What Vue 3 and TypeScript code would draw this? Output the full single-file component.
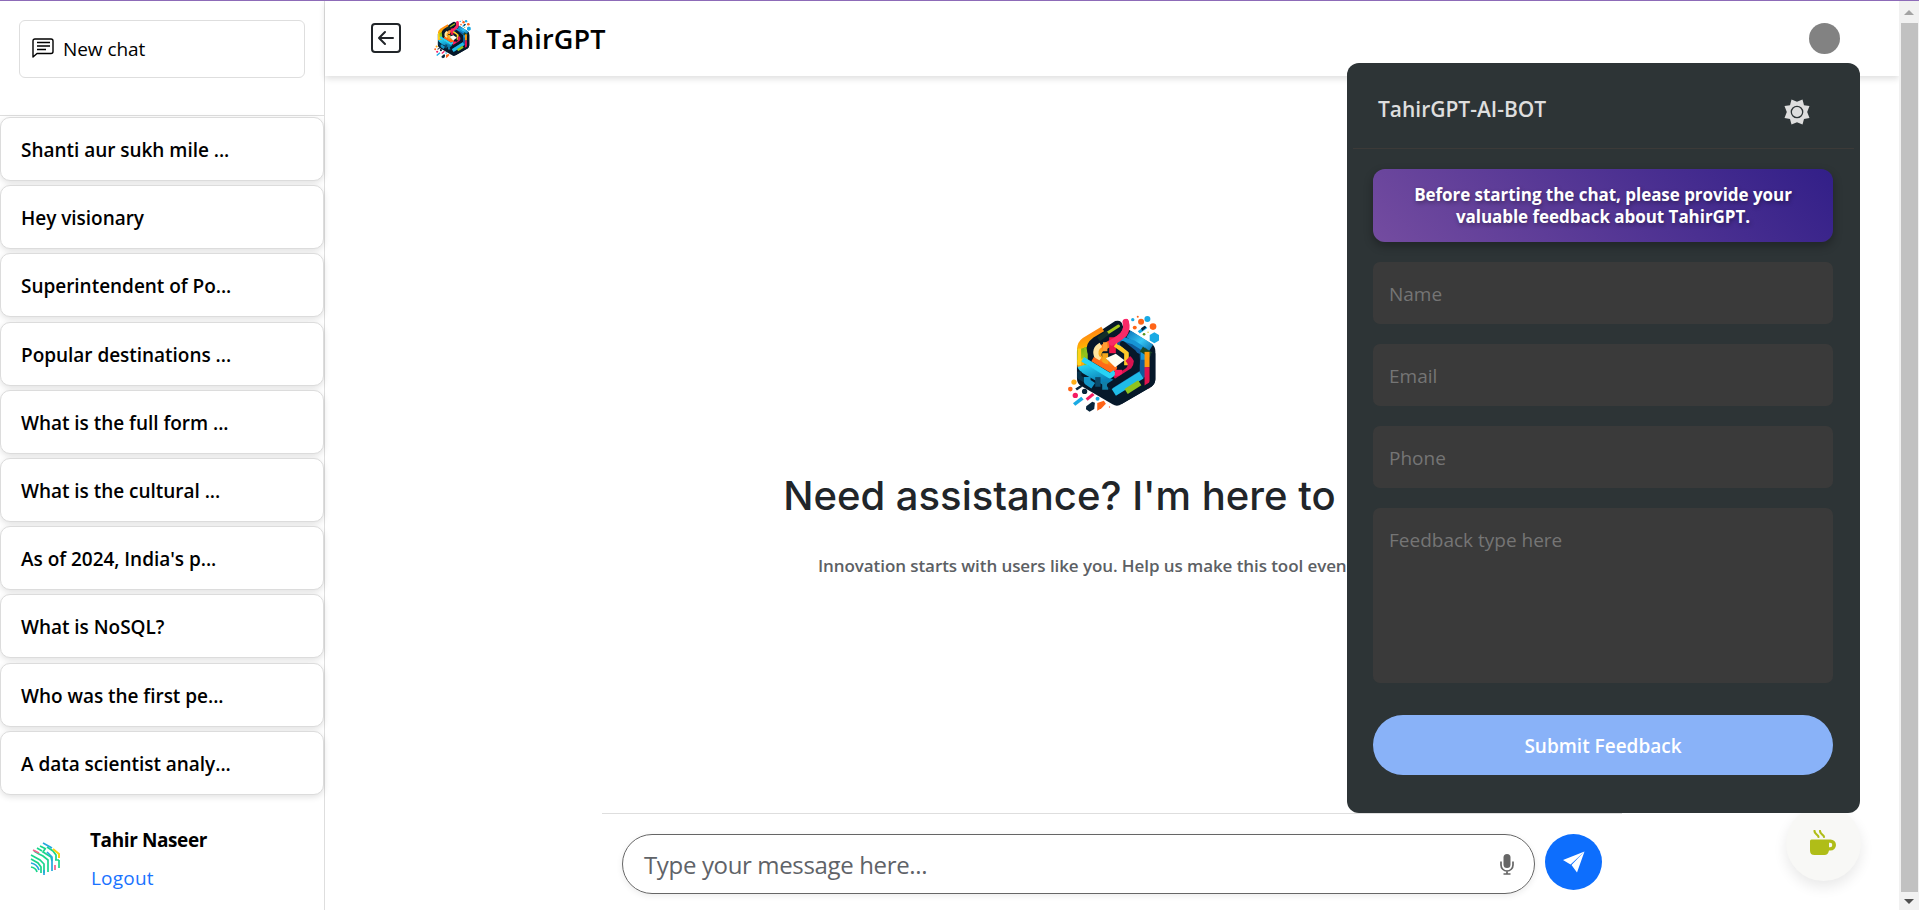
<script setup lang="ts">
const chats: string[] = [
  'Shanti aur sukh mile ...',
  'Hey visionary',
  'Superintendent of Po...',
  'Popular destinations ...',
  'What is the full form ...',
  'What is the cultural ...',
  "As of 2024, India's p...",
  'What is NoSQL?',
  'Who was the first pe...',
  'A data scientist analy...',
]
const fields: string[] = ['Name', 'Email', 'Phone']
</script>

<template>
  <svg class="defs" width="0" height="0" aria-hidden="true">
    <linearGradient id="warm" gradientUnits="userSpaceOnUse" x1="250" y1="90" x2="215" y2="270">
      <stop offset="0" stop-color="#ff2d75"/><stop offset=".38" stop-color="#f0164c"/><stop offset=".4" stop-color="#ff5a1f"/><stop offset=".6" stop-color="#ffb61c"/><stop offset=".8" stop-color="#ff6a12"/><stop offset="1" stop-color="#f04a1b"/>
    </linearGradient>
    <linearGradient id="left-band" gradientUnits="userSpaceOnUse" x1="118" y1="140" x2="160" y2="280">
      <stop offset="0" stop-color="#ff8a12"/><stop offset=".24" stop-color="#ffb400"/><stop offset=".26" stop-color="#7cb518"/><stop offset=".44" stop-color="#a8cc12"/><stop offset=".46" stop-color="#ffd000"/><stop offset=".58" stop-color="#ff9f0f"/><stop offset=".6" stop-color="#27d0f2"/><stop offset="1" stop-color="#0b83b8"/>
    </linearGradient>
    <linearGradient id="right-band" gradientUnits="userSpaceOnUse" x1="270" y1="120" x2="335" y2="190">
      <stop offset="0" stop-color="#0d77bd"/><stop offset=".5" stop-color="#35c6f5"/><stop offset="1" stop-color="#0a6aa8"/>
    </linearGradient>
    <symbol id="logo" viewBox="82 72 278 298">
      <path d="M226 93 Q246 88 249 108 L336 162 Q347 169 347 184 V270 Q346 284 334 292 L246 343 Q232 353 218 344 L124 289 Q111 281 111 266 V185 Q111 170 124 160Z" fill="#06182a"/>
      <g fill="none" stroke-linejoin="round">
        <path d="M192 123 L136 157 Q126 164 126 178 V222 Q126 232 136 238 L216 284" stroke="url(#left-band)" stroke-width="29"/>
        <path d="M138 172 V226" stroke="#8fc31f" stroke-width="11"/>
        <path d="M118 176 V226" stroke="#ffd21a" stroke-width="11"/>
        <path d="M118 245 V262 L140 275" stroke="#07334d" stroke-width="13"/>
        <path d="M142 262 V276 L160 288" stroke="#1295c8" stroke-width="20"/>
        <path d="M174 262 V291" stroke="#0b4a6b" stroke-width="16"/>
        <path d="M196 276 V300" stroke="#117fa8" stroke-width="18"/>
        <path d="M238 106 L164 151 Q144 165 150 184 Q156 204 172 214" stroke="#06182a" stroke-width="17" stroke-linecap="round"/>
        <path d="M236 108 L183 142" stroke="#a5c81b" stroke-width="9" stroke-linecap="round"/>
        <path d="M204 128 L176 148" stroke="#132f28" stroke-width="14"/>
        <path d="M258 96 Q266 130 236 146 L187 174 Q167 188 180 208 L222 234" stroke="url(#warm)" stroke-width="19" stroke-linecap="round"/>
        <path d="M183 165 Q160 178 172 204 L180 210" stroke="#ffe6a0" stroke-width="15"/>
        <path d="M196 157 V184" stroke="#ff9f35" stroke-width="13"/>
        <path d="M218 142 V190" stroke="#ef1748" stroke-width="20"/>
        <path d="M196 190 V222" stroke="#f5a71b" stroke-width="18"/>
        <path d="M226 164 L260 188 V226" stroke="#ffc928" stroke-width="14"/>
        <path d="M158 208 L212 240 L226 232" stroke="#ff6b17" stroke-width="15"/>
        <path d="M128 208 L210 258 L226 248" stroke="#28d3f4" stroke-width="16"/>
        <path d="M264 206 Q286 226 262 246 L226 268" stroke="#d91350" stroke-width="21"/>
        <path d="M236 240 V258" stroke="#ff1b62" stroke-width="22"/>
        <path d="M266 132 L334 174" stroke="url(#right-band)" stroke-width="24"/>
        <path d="M236 152 L312 184 V250 L226 304" stroke="#0e5c9c" stroke-width="24"/>
        <path d="M246 146 L282 158 L310 176 V210" stroke="#1695d6" stroke-width="13"/>
        <path d="M305 178 L334 196" stroke="#1c4725" stroke-width="17"/>
        <path d="M249 162 L281 188 Q302 214 280 242 L210 287" stroke="#06182a" stroke-width="17" stroke-linecap="round"/>
        <path d="M258 96 Q264 128 236 146 L216 158" stroke="#fa2a68" stroke-width="18" stroke-linecap="round"/>
        <path d="M322 186 V232" stroke="#ff9a0b" stroke-width="15"/>
        <path d="M322 232 V296" stroke="#e0134e" stroke-width="15"/>
        <path d="M222 308 L305 256" stroke="#1fbce8" stroke-width="24"/>
        <path d="M259 305 L300 279" stroke="#8fc31f" stroke-width="18"/>
        <path d="M340 190 V268 Q340 279 330 286 L243 336" stroke="#06182a" stroke-width="14"/>
      </g>
      <path d="M198 205 L228 192 L254 211 L226 232Z" fill="#fffdf0"/>
      <g fill="#19aae4"><path d="M344 127l14 8v17l-14 8-14-8v-17z"/><circle cx="323" cy="87" r="9"/><circle cx="279" cy="89" r="5"/><path d="M294 124l22-17 7 7-23 17z"/><circle cx="173" cy="327" r="6"/><path d="M99 341l25-20 7 8-25 19z"/></g>
      <g fill="#ff6417"><circle cx="304" cy="95" r="9"/><circle cx="340" cy="110" r="10"/><circle cx="285" cy="113" r="6"/><circle cx="91" cy="298" r="7"/><path d="M172 363v-23l20-7 6 9-13 14z"/><circle cx="294" cy="80" r="3"/></g>
      <g fill="#08243a"><circle cx="134" cy="305" r="8"/><path d="M139 350l18-14 8 3-2 19-14 8-11-7zM106 296l17-10 4 5-16 11zM304 115l11-8 5 6-13 10z"/></g>
      <g fill="#f51b62"><circle cx="106" cy="317" r="8"/><path d="M137 326l20-16 7 6-21 17z"/></g>
      <circle cx="102" cy="277" r="8" fill="#ffad16"/><circle cx="313" cy="133" r="4" fill="#57931c"/><circle cx="325" cy="127" r="2" fill="#d1c915"/><circle cx="209" cy="352" r="2" fill="#f76542"/>
    </symbol>
  </svg>
  <div class="page">
    <div class="layout">
      <aside class="sidebar">
        <div class="top">
          <button class="new-chat">
            <svg width="22" height="20" viewBox="0 0 22 20" fill="none" stroke="#000" stroke-width="1.400" stroke-linejoin="round"><path d="M1 19V3q0-2 2-2h16q2 0 2 2v10.500q0 2-2 2H5z"/><path d="M5 4.500h13M5 8h13M5 11.500h9"/></svg>
            <span>New chat</span>
          </button>
        </div>
        <nav class="history">
          <div v-for="c in chats" :key="c" class="chat"><span>{{ c }}</span></div>
        </nav>
        <div class="user">
          <svg class="avatar" width="30" height="34" viewBox="0 0 30 34" fill="none" stroke="#19d58b" stroke-width="1.700">
            <path d="M7 6l5 3M10 4l6 3M4 9l5 3 4 2 5 4v12M1 13l9 5 4 4v9M1 17l7 4 3 4v6M1 25q5 1 6 5M15 7l-2 3 8 5 1 4M17 5l6 4 3 4v5M29 18v8M25 18h4"/>
            <path stroke="#24a8dc" d="M13 1l9 5M1 21q6 1 8 7M17 10l5 5v14M14 28v5"/>
            <path stroke="#f4618c" d="M3 8l6 3M25 23v5"/><path stroke="#f9d314" stroke-width="2" d="M23 7l6 5v4"/>
          </svg>
          <div class="who"><b>Tahir Naseer</b><a>Logout</a></div>
        </div>
      </aside>
      <div class="content">
        <header class="header">
          <svg class="back" width="32" height="32" viewBox="0 0 32 32" fill="none" stroke="#212529" stroke-width="2" stroke-linecap="round" stroke-linejoin="round"><rect x="2" y="2" width="28" height="28" rx="3"/><path d="M23 16H9.500M15 10l-6 6 6 6"/></svg>
          <svg class="brand-logo" width="37" height="40"><use href="#logo"/></svg>
          <span class="brand">TahirGPT</span>
          <i class="dot"></i>
        </header>
        <main class="hero">
          <svg class="hero-logo" width="93" height="99"><use href="#logo"/></svg>
          <h1>Need assistance? I'm here to help!</h1>
          <p>Innovation starts with users like you. Help us make this tool even better!</p>
        </main>
        <footer class="composer">
          <div class="message">
            <span>Type your message here...</span>
            <svg width="14" height="21" viewBox="0 0 14 21"><rect x="3.500" y="0" width="7" height="14" rx="3.500" fill="#666"/><path d="M1 7.500V11a6 6 0 0 0 12 0V7.500M7 17v3M3.500 20h7" fill="none" stroke="#666" stroke-width="1.700"/></svg>
          </div>
          <button class="send"><svg width="22" height="22" viewBox="0 0 22 22" fill="#fff"><path d="M21.500.5L0 9l7.500 4.500zM21.500.5L8.500 14l5.500 7.500z"/></svg></button>
        </footer>
      </div>
      <div class="scrollbar"><i class="up"></i><i class="thumb"></i><i class="down"></i></div>
    </div>
    <button class="coffee"><svg width="26" height="26" viewBox="0 0 26 26"><path d="M0 11q0-1.500 1.500-1.500H20.500a5.500 5.500 0 0 1 0 11h-1.500q-1 4.500-4.500 4.500H4.500q-4.500 0-4.500-4.500zM19 12.700V17.300h1a2.300 2.300 0 0 0 0-4.600z" fill="#b0bd18" fill-rule="evenodd"/><path d="M4.500 1q0 2 2 3.300T8.500 7M10 1q0 2 2 3.300T14 7" fill="none" stroke="#b0bd18" stroke-width="2.200" stroke-linecap="round"/></svg></button>
    <section class="panel">
      <div class="panel-head">
        <span>TahirGPT-AI-BOT</span>
        <svg width="26" height="26" viewBox="0 0 26 26"><path fill="#dedede" d="M13 2.800L18.500.5 20 6.200 25.500 7 23.200 13 25.500 19 20 20 18.500 25.500 13 23.200 7.500 25.500 6 20 .5 19 2.800 13 .5 7 6 6.200 7.500.5z"/><circle cx="13" cy="13" r="5.700" fill="#dedede" stroke="#2d3436" stroke-width="1.300"/></svg>
      </div>
      <div class="form">
        <div class="banner">Before starting the chat, please provide your<br>valuable feedback about TahirGPT.</div>
        <div v-for="f in fields" :key="f" class="field"><span>{{ f }}</span></div>
        <div class="field area"><span>Feedback type here</span></div>
        <button class="submit">Submit Feedback</button>
      </div>
    </section>
  </div>
</template>

<style>
body { margin: 0; overflow: hidden; background: #fff; }
</style>

<style scoped>
* { box-sizing: border-box; }
.defs { position: absolute; }
button { border: 0; padding: 0; font: inherit; }
svg { display: block; flex: none; }
.page { position: relative; width: 1919px; height: 910px; overflow: hidden; border-top: 1px solid #8d6bb8; font-family: "Segoe UI", "Open Sans", "Noto Sans", sans-serif; color: #000; }
.layout { display: flex; height: 909px; }
.sidebar { width: 325px; height: 100%; border-right: 1px solid #dedede; display: flex; flex-direction: column; flex: none; }
.top { height: 115px; padding: 19px 19px 0; border-bottom: 1px solid #dedede; flex: none; }
.new-chat { display: flex; align-items: center; gap: 9px; width: 286px; height: 58px; padding: 0 12px; background: #fff; border: 1px solid #dedede; border-radius: 6px; font-size: 19px; letter-spacing: -.05px; }
.new-chat svg { margin-top: -2px; }
.history { display: flex; flex-direction: column; gap: 4.200px; padding-top: 1px; }
.chat { height: 64px; width: 324px; padding: 2px 0 0 20px; display: flex; align-items: center; background: #fff; border: 1px solid #dcdcdc; border-radius: 10px; box-shadow: 0 2px 6px rgba(0,0,0,.12); font-size: 19px; font-weight: 600; letter-spacing: -.03px; flex: none; }
.user { display: flex; padding: 32px 0 0 30px; }
.avatar { margin-top: 15px; }
.who { display: flex; flex-direction: column; margin-left: 30px; font-size: 19px; line-height: 27px; gap: 11px; }
.who b { letter-spacing: -.4px; }
.who a { color: #1a73ff; padding-left: 1px; letter-spacing: .2px; }
.content { width: 1574px; display: flex; flex-direction: column; }
.header { height: 75px; display: flex; align-items: center; padding: 0 59px 0 45px; box-shadow: 0 3px 6px rgba(0,0,0,.12); flex: none; }
.back { margin-top: -1px; }
.brand-logo { margin-left: 32px; }
.brand { margin-left: 15px; font-size: 27px; font-weight: 600; letter-spacing: .1px; }
.dot { width: 31px; height: 31px; border-radius: 50%; background: #828282; margin-left: auto; }
.hero { height: 737px; display: flex; flex-direction: column; align-items: center; padding-top: 238px; flex: none; }
.hero-logo { margin-left: 3px; }
h1 { margin: 53px 0 0; font: 500 40px/60px Inter, sans-serif; color: #212529; white-space: nowrap; }
p { margin: 25px 0 0; font-size: 17px; line-height: 30px; font-weight: 600; letter-spacing: -.08px; color: #5c6064; white-space: nowrap; }
.composer { width: 1020px; margin-left: 277px; border-top: 1px solid #dedede; display: flex; padding: 20px 20px 0; gap: 10px; }
.message { width: 913px; height: 60px; border: 1px solid #666; border-radius: 30px; display: flex; align-items: center; justify-content: space-between; padding: 0 20px 0 21px; color: #5f6368; font-size: 24px; letter-spacing: -.35px; box-shadow: 0 2px 6px rgba(0,0,0,.08); }
.send { width: 57px; height: 56px; border-radius: 50%; background: #0d6efd; display: flex; align-items: center; justify-content: center; flex: none; }
.scrollbar { width: 20px; background: #f1f1f1; display: flex; flex-direction: column; align-items: center; justify-content: space-between; padding: 9px 0 6px; }
.up { border: 5px solid transparent; border-top: 0; border-bottom-color: #a3a3a3; }
.down { border: 5px solid transparent; border-bottom: 0; border-top-color: #505050; }
.thumb { width: 17px; height: 869px; background: #c1c1c1; }
.coffee { position: absolute; left: 1786px; top: 805px; width: 75px; height: 75px; border-radius: 50%; background: #f8f8f6; display: flex; align-items: center; justify-content: center; box-shadow: 0 6px 14px rgba(0,0,0,.09); }
.coffee svg { margin: -2px 2px 0 0; }
.panel { position: absolute; left: 1347px; top: 62px; width: 513px; height: 750px; border-radius: 12px; background: #2d3436; }
.panel-head { height: 86px; margin: 0 6px; border-bottom: 1px solid #3c3a38; display: flex; justify-content: space-between; padding: 29px 44px 0 25px; color: #dedede; font-size: 21px; line-height: 34px; font-weight: 600; letter-spacing: -.02px; }
.panel-head svg { margin-top: 7px; }
.form { display: flex; flex-direction: column; gap: 20px; padding: 20px 27px 0 26px; }
.banner { height: 73px; padding-top: 15px; border-radius: 12px; background: linear-gradient(45deg, #744ca0, #321f88); box-shadow: 0 4px 10px rgba(0,0,0,.3); color: #fff; text-align: center; font-size: 17px; line-height: 22px; font-weight: 700; letter-spacing: -.04px; text-shadow: 1px 2px 4px rgba(0,0,0,.35); }
.field { height: 62px; border-radius: 7px; background: #3a3a3a; color: #757575; font-size: 19px; line-height: 26px; padding: 19px 16px; }
.area { height: 175px; }
.submit { height: 60px; margin-top: 12px; padding-top: 2px; border-radius: 30px; background: #89b2f8; color: #fff; font-size: 19px; font-weight: 600; }
</style>
